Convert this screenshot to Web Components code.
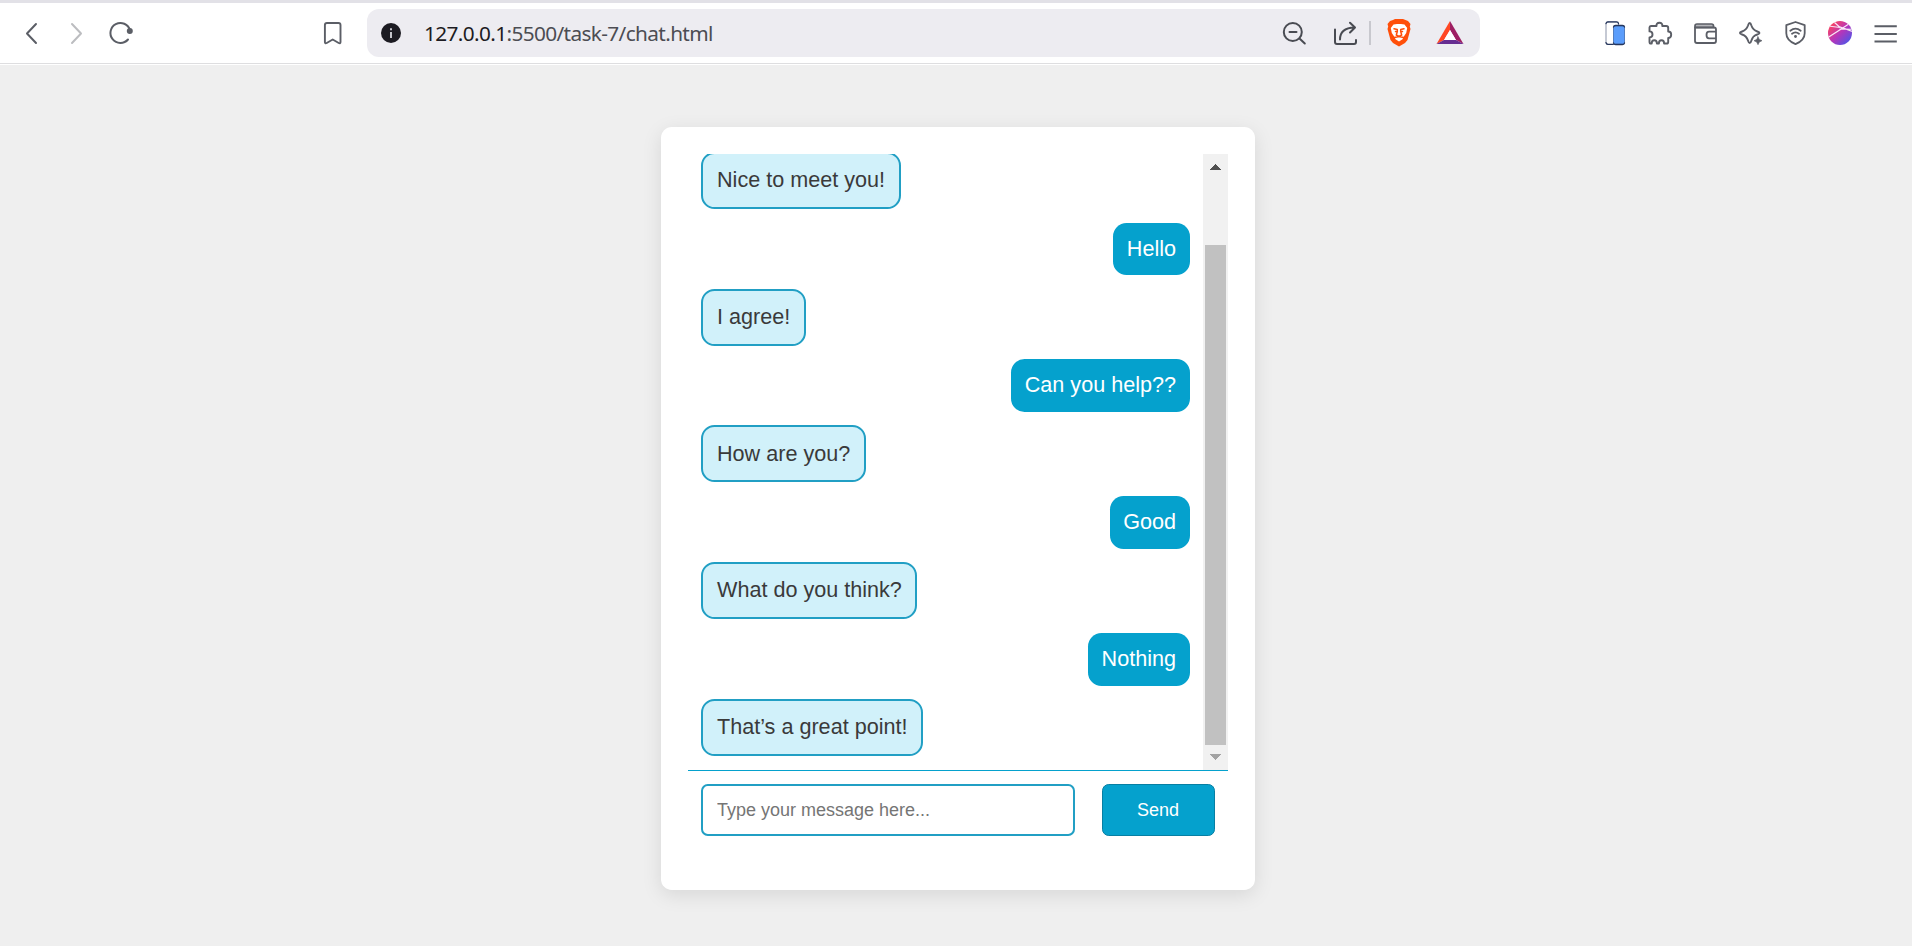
<!DOCTYPE html>
<html lang="en">
<head>
<meta charset="utf-8">
<title>Chat</title>
<style>
html,body{margin:0;height:100%}
body{background:#efefef;font-family:"Liberation Sans",Arial,sans-serif;overflow:hidden}
</style>
</head>
<body>
<chat-page></chat-page>
<script>
const define = (name, html) => customElements.define(name, class extends HTMLElement {
  constructor() {
    super();
    const t = document.createElement('template');
    t.innerHTML = html;
    this.attachShadow({mode: 'open'}).append(t.content.cloneNode(true));
  }
});

const icons = {
  back: ['9 9 45 48', '<path d="M36 24 27 33.5l9 9.5"/>'],
  forward: ['54 9 45 48', '<path stroke="#bcbdc0" d="m72 24 9 9.5-9 9.5"/>'],
  reload: ['99 9 45 48', '<path d="M130 30a10 10 0 1 0-2 9.5"/><circle cx="129.8" cy="31" r="3" fill="#5b5e66" stroke="none"/>'],
  bookmark: ['310 9 45 48', '<path stroke-width="1.9" d="M327 23h11.500q2 0 2 2v17q0 2-1.800 1l-6-3.500-6 3.500q-1.800 1-1.800-1V25q0-2 2.100-2z"/>'],
  info: ['367 9 48 48', '<circle cx="391" cy="33" r="10" fill="#1c1b22" stroke="none"/><path stroke="#d8d8de" stroke-width="1.8" stroke-linecap="butt" d="M391 32v6M391 28.200v2"/>'],
  zoom: ['1270 9 48 48', '<g stroke="#494b52"><circle cx="1292.800" cy="32" r="9"/><path d="M1289.500 32h7M1299.500 38.500l5.300 5"/></g>'],
  share: ['1322 9 46 48', '<g stroke="#494b52"><path d="M1335 29.500V42q0 2 2 2h17q2 0 2-2v-2"/><path d="M1340 39.500q0-11.500 14.500-12M1350 22.700l5 4.800-5 5"/></g>'],
  lion: ['1375 9 48 48', '<g stroke="none"><path fill="#ff4f0a" d="m1393 20 2-1h8l2.500 1 2.500 1 2.500 3-.7 2.500.7 2.500-3 11-2.500 3-6 3.500-6-3.500-2.500-3-3-11 .7-2.500-.7-2.500 2.500-3z"/><path fill="#fff" d="m1393.500 24.500 3.500-.500h4l3.500.500 2.700 3.500-1 5-2.700 4-1 2.300-3.500 2.200-3.500-2.200-1-2.300-2.700-4-1-5z"/></g><path stroke="#ff4f0a" stroke-width="1.500" d="m1394 28.800 3.300.700v2.300l-1.800-.300M1404 28.800l-3.300.700v2.300l1.800-.300M1397.300 31.500l-1 3.500 2.700 1.500 2.700-1.500-1-3.500M1394.500 37.500l4.500-1 4.500 1"/>'],
  bat: ['1426 9 48 48', '<g stroke="none"><path fill="#ff4724" d="M1450 21v9l-6 10-7.500 4z"/><path fill="#9e1f63" d="M1450 21v9l6 10 7.500 4z"/><path fill="#662d91" d="m1436.500 44 7.500-4h12l7.500 4z"/><path fill="#fff" d="m1450 30-6 10h12z"/></g>'],
  phones: ['1592 9 45 48', '<rect x="1606" y="22" width="12.500" height="22.500" rx="2" fill="#fff" stroke="#8b93a8" stroke-width="1"/><path stroke="#26365c" stroke-width="1.300" d="M1606 23.500q.200-1.700 2-1.700h8.500q1.800 0 2 1.700M1606 42.700q.300 1.700 2 1.700h5"/><rect x="1613.500" y="25.700" width="11" height="18.600" rx="1.800" fill="#5b9dfb" stroke="#527ec0" stroke-width="1"/><path stroke="#26365c" stroke-width="1.300" d="M1613.500 27q.200-1.500 2-1.500h7q1.800 0 2 1.500M1613.500 43q.200 1.500 2 1.500h7q1.800 0 2-1.500"/>'],
  puzzle: ['1637 9 45 48', '<path stroke-width="1.900" d="M1651.500 26h5q-.300-3.200 2.900-3.200t2.900 3.200h4q1.900 0 1.900 1.900v3.600q3 0 3 3.200t-3 3.200v4q0 1.600-1.600 1.600h-2.500q0-3.200-2.600-3.200t-2.600 3.200h-2q0-3.200-2.600-3.200t-2.600 3.200h-.600q-1.600 0-1.600-1.600v-4.500q3-.200 3-3t-3-3v-3.800q0-1.600 1.400-1.600z"/>'],
  wallet: ['1682 9 45 48', '<path fill="#b5b6ba" stroke-width="1.700" d="M1695 27.500V26q0-2 2-2h14.500q2 0 2 2v1.500z"/><path stroke-width="1.800" d="M1695 27.500h19q2 0 2 2V41q0 2-2 2h-17q-2 0-2-2zM1716 31.700h-7q-2.500 0-2.500 3.300t2.500 3.300h7"/>'],
  sparkle: ['1728 9 45 48', '<path stroke-width="1.900" d="M1749.700 23q1 0 1.600 2.300 1.500 4.700 6 6.200 2.200.700 2.200 1.500t-2.200 1.500q-4.500 1.500-6 6.200-.600 2.300-1.600 2.300t-1.600-2.300q-1.500-4.700-6-6.200-2.200-.700-2.200-1.500t2.200-1.500q4.500-1.500 6-6.200.600-2.300 1.600-2.300z"/><circle cx="1758" cy="40.700" r="4.800" fill="#fff" stroke="none"/><path fill="#5b5e66" stroke="#5b5e66" stroke-width=".6" d="m1758 36.700 1.300 2.700 2.700 1.300-2.700 1.300-1.300 2.700-1.300-2.700-2.700-1.300 2.700-1.300z"/>'],
  shield: ['1773 9 45 48', '<path stroke-width="1.800" d="m1795.500 22 9.200 3.200v8q0 7-9.200 11-9.200-4-9.200-11v-8z"/><path stroke-width="1.800" d="M1790.300 30.700q5.200-4 10.400 0M1792 33.700q3.500-2.600 7 0"/><circle cx="1795.500" cy="36.500" r="1.400" fill="#5b5e66" stroke="none"/>'],
  orb: ['1818 9 45 48', '<defs><linearGradient id="g" x1="0" y1="0" x2="1" y2="1"><stop offset=".1" stop-color="#ff455b"/><stop offset=".5" stop-color="#b735b9"/><stop offset=".9" stop-color="#4e55e8"/></linearGradient><clipPath id="c"><circle cx="1840" cy="33" r="12"/></clipPath></defs><circle cx="1840" cy="33" r="12" fill="url(#g)" stroke="none"/><path clip-path="url(#c)" stroke="#f8e6f7" stroke-width="1.200" d="m1828 37.500 14-9 9-6M1834 22l5 4.500 15 5.500M1828 26l12 1.500M1840 29l14 .300"/>'],
  menu: ['1863 9 45 48', '<path stroke-linecap="butt" d="M1874.500 26.300h22.300M1874.500 34h22.300M1874.500 41.500h22.300"/>']
};

customElements.define('tool-icon', class extends HTMLElement {
  connectedCallback() {
    const [box, art] = icons[this.getAttribute('name')];
    const [, , w, h] = box.split(' ');
    this.attachShadow({mode: 'open'}).innerHTML =
      `<style>:host{display:block;flex:none;width:${w}px;height:${h}px}svg{display:block}</style>
       <svg width="${w}" height="${h}" viewBox="${box}" fill="none" stroke="#5b5e66" stroke-width="2" stroke-linecap="round" stroke-linejoin="round">${art}</svg>`;
  }
});

define('address-bar', `<style>
:host{display:flex;box-sizing:border-box;width:1113px;height:48px;border-radius:12px;background:#edecf1;margin-left:12px}
.url{flex:1;padding-left:9px;font:20.800px/48px "Noto Sans","Open Sans",sans-serif;letter-spacing:-.63px;color:#4c4d53;white-space:nowrap}
b{font-weight:400;color:#1c1b22}
i{flex:none;width:2px;height:24px;margin:12px 4px 0 1px;background:#c8c8ce}
.gap{width:4px}.gap2{width:3px}.end{width:6px}
</style>
<tool-icon name="info"></tool-icon><div class="url"><b>127.0.0.1</b>:5500/task-7/chat.html</div>
<tool-icon name="zoom"></tool-icon><span class="gap"></span><tool-icon name="share"></tool-icon><i></i>
<tool-icon name="lion"></tool-icon><span class="gap2"></span><tool-icon name="bat"></tool-icon><span class="end"></span>`);

define('browser-bar', `<style>
:host{display:flex;box-sizing:border-box;height:65px;padding:6px 4px 0 9px;border-top:3px solid #e2e1e7;background:linear-gradient(#fff,#fff) 0 61px/100% 1px no-repeat,linear-gradient(#dedee0,#dedee0) 0 60px/100% 1px no-repeat,#fff}
.s1{width:166px}.s2{flex:1}.s3{width:1px}
</style>
<tool-icon name="back"></tool-icon><tool-icon name="forward"></tool-icon><tool-icon name="reload"></tool-icon>
<span class="s1"></span><tool-icon name="bookmark"></tool-icon><address-bar></address-bar><span class="s2"></span>
<tool-icon name="phones"></tool-icon><tool-icon name="puzzle"></tool-icon><tool-icon name="wallet"></tool-icon><span class="s3"></span><tool-icon name="sparkle"></tool-icon><tool-icon name="shield"></tool-icon><tool-icon name="orb"></tool-icon><tool-icon name="menu"></tool-icon>`);

define('chat-message', `<style>
:host{display:block;box-sizing:border-box;flex:none;align-self:flex-start;height:56.750px;margin-bottom:13.750px;padding:13.100px 13.500px 0 14px;border:2px solid #219fc4;border-radius:13.500px;background:#d1f1fa;color:#3a3a3a;font-size:21.600px;line-height:26px;white-space:nowrap}
:host([sent]){align-self:flex-end;height:52.950px;margin-bottom:13.300px;padding:13px 14px 0 13.500px;border:0;background:#05a1cd;color:#fff}
</style><slot></slot>`);

define('scroll-track', `<style>
:host{display:flex;flex-direction:column;align-items:center;flex:none;box-sizing:border-box;width:25px;padding:10px 0;background:#f1f1f1}
svg{display:block;flex:none}
.thumb{width:21px;height:500px;margin:75px 0 9px;background:#c1c1c1}
</style>
<svg width="11" height="6" shape-rendering="crispEdges"><path fill="#505050" d="M5.500 0 11 6H0z"/></svg><div class="thumb"></div>
<svg width="11" height="6" shape-rendering="crispEdges"><path fill="#a3a3a3" d="M0 0h11L5.500 6z"/></svg>`);

define('message-list', `<style>
:host{display:flex;height:616px;border-bottom:1px solid #05a1cd;overflow:hidden}
.messages{display:flex;flex:1;flex-direction:column;justify-content:flex-end;padding:0 13px .550px 13px;overflow:hidden}
</style><div class="messages"><slot></slot></div><scroll-track></scroll-track>`);

define('message-form', `<style>
:host{display:flex;justify-content:space-between;padding:13px 13px 0}
input,button{box-sizing:border-box;height:52px;margin:0;border-radius:6.750px;font:18px "Liberation Sans",Arial,sans-serif}
input{width:374px;padding:0 14px;border:2px solid #219fc4;background:#fff;outline:0}
input::placeholder{color:#757575;opacity:1}
button{width:113px;padding:0 1px 0 0;border:1px solid #087fa3;background:#05a1cd;color:#fff}
</style><input placeholder="Type your message here..."><button>Send</button>`);

define('chat-card', `<style>
:host{display:block;box-sizing:border-box;width:594px;height:763px;margin:62px 0 0 661px;padding:27px;border-radius:10.800px;background:#fff;box-shadow:0 5px 20px rgba(0,0,0,.1)}
</style>
<message-list>
<chat-message>Nice to meet you!</chat-message>
<chat-message sent>Hello</chat-message>
<chat-message>I agree!</chat-message>
<chat-message sent>Can you help??</chat-message>
<chat-message>How are you?</chat-message>
<chat-message sent>Good</chat-message>
<chat-message>What do you think?</chat-message>
<chat-message sent>Nothing</chat-message>
<chat-message>That’s a great point!</chat-message>
</message-list>
<message-form></message-form>`);

define('chat-page', `<style>:host{display:flex;flex-direction:column;height:946px}browser-bar{flex:none}</style><browser-bar></browser-bar><chat-card></chat-card>`);
</script>
</body>
</html>
